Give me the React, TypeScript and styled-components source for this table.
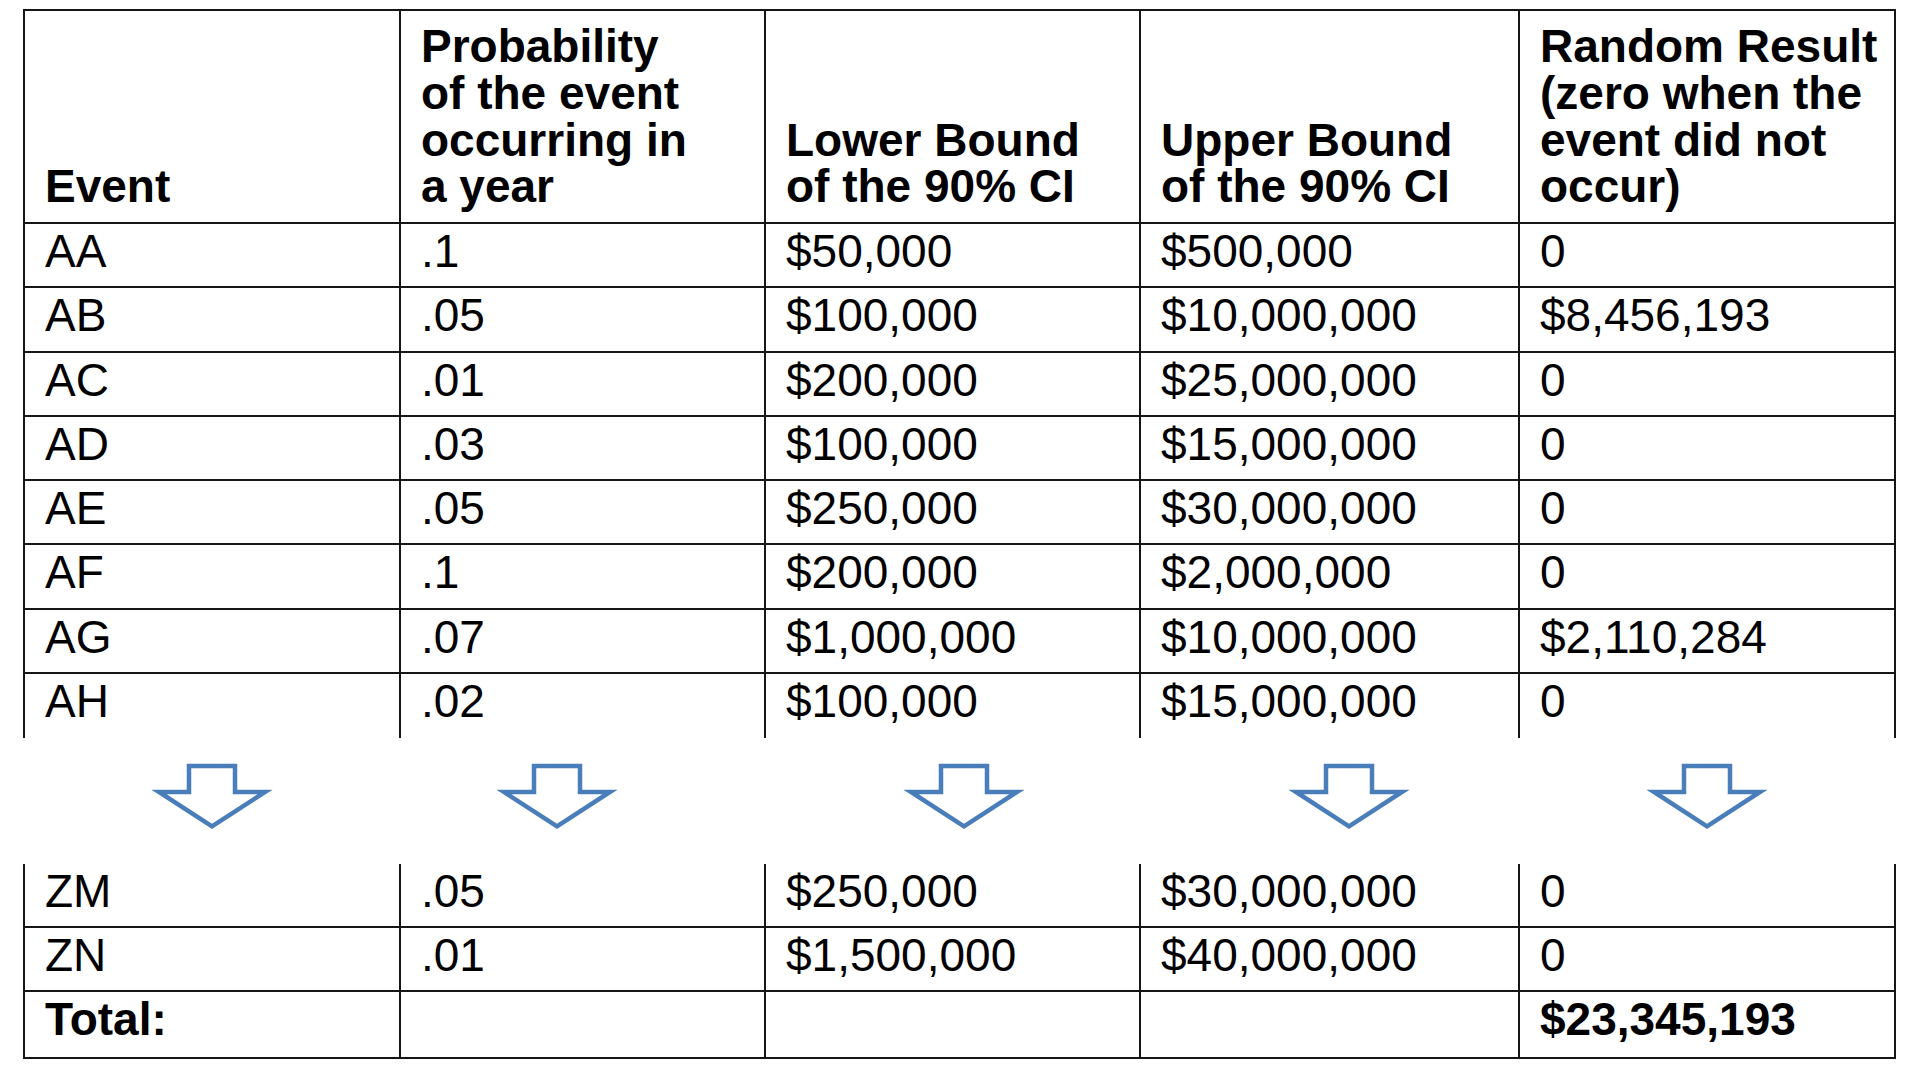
import React from 'react';
import styled, { createGlobalStyle } from 'styled-components';

const GlobalStyle = createGlobalStyle`
  html, body { margin: 0; padding: 0; background: #ffffff; }
  body {
    font-family: "Liberation Sans", Arial, Helvetica, sans-serif;
    color: #000000;
  }
`;

const COLS = '376px 365px 375px 379px 376px';
const LINE_COLOR = '#161616';

const Page = styled.div`
  width: 1920px;
  height: 1080px;
  box-sizing: border-box;
  padding: 9px 0 0 23px;
  overflow: hidden;
  background: #ffffff;
`;

const Section = styled.div<{ $top?: boolean }>`
  width: 1873px;
  box-sizing: border-box;
  border-left: 2px solid ${LINE_COLOR};
  border-top: ${(p) => (p.$top ? `2px solid ${LINE_COLOR}` : 'none')};
`;

const Row = styled.div<{ $h: number; $noBottom?: boolean }>`
  display: grid;
  grid-template-columns: ${COLS};
  height: ${(p) => p.$h}px;
  box-sizing: border-box;
  border-bottom: ${(p) => (p.$noBottom ? 'none' : `2px solid ${LINE_COLOR}`)};
`;

const Cell = styled.div<{ $bold?: boolean }>`
  box-sizing: border-box;
  border-right: 2px solid ${LINE_COLOR};
  padding: 2px 0 0 20px;
  font-size: 46px;
  line-height: 50px;
  font-weight: ${(p) => (p.$bold ? 700 : 400)};
  white-space: nowrap;
  overflow: hidden;
`;

const HeadCell = styled.div`
  box-sizing: border-box;
  border-right: 2px solid ${LINE_COLOR};
  padding: 0 0 12px 20px;
  display: flex;
  flex-direction: column;
  justify-content: flex-end;
  font-size: 46px;
  line-height: 46.67px;
  font-weight: 700;
  white-space: nowrap;
`;

const ArrowStrip = styled.div`
  display: grid;
  grid-template-columns: ${COLS};
  height: 126px;
  padding-left: 2px;
  width: 1873px;
  box-sizing: border-box;
`;

const ArrowSlot = styled.div<{ $offset: number }>`
  display: flex;
  justify-content: center;
  padding-top: 22px;
  transform: translateX(${(p) => p.$offset}px);
`;

const ArrowSvg = styled.svg`
  display: block;
  width: 126px;
  height: 72px;
`;

const DownArrow: React.FC = () => (
  <ArrowSvg viewBox="0 0 126 72">
    <polygon
      points="40,6 86,6 86,32 116,32 63,66.3 10,32 40,32"
      fill="#ffffff"
      stroke="#4a7ebb"
      strokeWidth={4.5}
      strokeLinejoin="miter"
      strokeMiterlimit={10}
    />
  </ArrowSvg>
);

type RowData = [string, string, string, string, string];

const topRows: RowData[] = [
  ['AA', '.1', '$50,000', '$500,000', '0'],
  ['AB', '.05', '$100,000', '$10,000,000', '$8,456,193'],
  ['AC', '.01', '$200,000', '$25,000,000', '0'],
  ['AD', '.03', '$100,000', '$15,000,000', '0'],
  ['AE', '.05', '$250,000', '$30,000,000', '0'],
  ['AF', '.1', '$200,000', '$2,000,000', '0'],
  ['AG', '.07', '$1,000,000', '$10,000,000', '$2,110,284'],
  ['AH', '.02', '$100,000', '$15,000,000', '0'],
];

const bottomRows: RowData[] = [
  ['ZM', '.05', '$250,000', '$30,000,000', '0'],
  ['ZN', '.01', '$1,500,000', '$40,000,000', '0'],
];

const headers: string[][] = [
  ['Event'],
  ['Probability', 'of the event', 'occurring in', 'a year'],
  ['Lower Bound', 'of the 90% CI'],
  ['Upper Bound', 'of the 90% CI'],
  ['Random Result', '(zero when the', 'event did not', 'occur)'],
];

const arrowOffsets = [-1, -27, 10, 18, -1];

export default function App() {
  return (
    <>
      <GlobalStyle />
      <Page>
        <Section $top>
          <Row $h={213}>
            {headers.map((lines, i) => (
              <HeadCell key={i}>
                {lines.map((l, j) => (
                  <span key={j}>{l}</span>
                ))}
              </HeadCell>
            ))}
          </Row>
          {topRows.map((r, i) => (
            <Row key={r[0]} $h={64.25} $noBottom={i === topRows.length - 1}>
              {r.map((c, j) => (
                <Cell key={j}>{c}</Cell>
              ))}
            </Row>
          ))}
        </Section>
        <ArrowStrip>
          {arrowOffsets.map((o, i) => (
            <ArrowSlot key={i} $offset={o}>
              <DownArrow />
            </ArrowSlot>
          ))}
        </ArrowStrip>
        <Section>
          {bottomRows.map((r) => (
            <Row key={r[0]} $h={64}>
              {r.map((c, j) => (
                <Cell key={j}>{c}</Cell>
              ))}
            </Row>
          ))}
          <Row $h={67}>
            <Cell $bold>Total:</Cell>
            <Cell />
            <Cell />
            <Cell />
            <Cell $bold>$23,345,193</Cell>
          </Row>
        </Section>
      </Page>
    </>
  );
}
